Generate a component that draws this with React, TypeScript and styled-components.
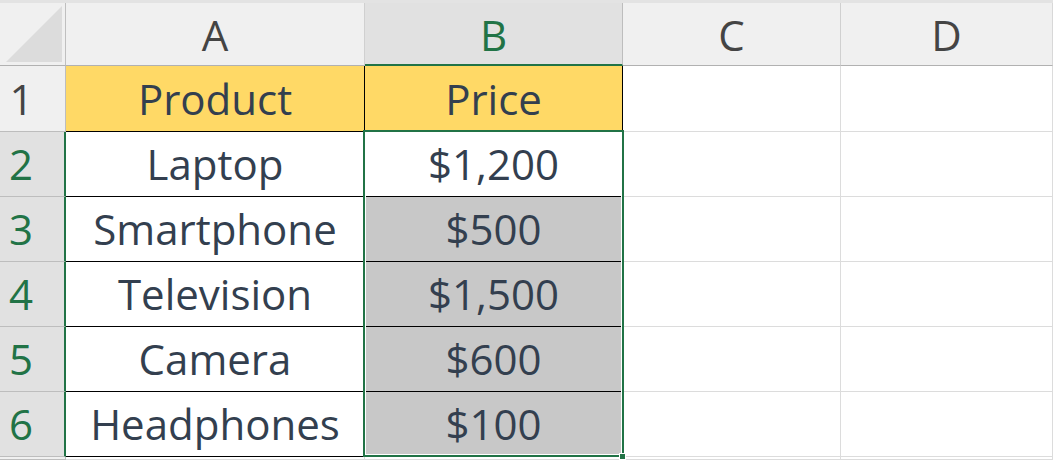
import React from "react";
import styled, { createGlobalStyle, css } from "styled-components";

const GREEN = "#217346";
const TEXT = "#333f4f";

const Global = createGlobalStyle`
  html, body { margin: 0; padding: 0; background: #ffffff; overflow: hidden; }
  * { box-sizing: border-box; }
`;

const Page = styled.div`
  width: 1053px;
  height: 460px;
  overflow: hidden;
  background: #ffffff;
  font-family: "Open Sans", "Noto Sans", sans-serif;
`;

const TopStrip = styled.div`
  height: 3px;
  background: #e3e3e3;
`;

const Grid = styled.div`
  position: relative;
  display: grid;
  grid-template-columns: 66px 299px 258px 218px 1fr;
  grid-template-rows: 63px 66px repeat(5, 65px) 1fr;
  height: 457px;
`;

const Corner = styled.div`
  background: #f0f0f0;
  border-right: 1px solid #bfbfbf;
  border-bottom: 1px solid #b1b1b1;
  display: flex;
  align-items: flex-end;
  justify-content: flex-end;
  padding: 0 3px 3px 0;
`;

const ColHeader = styled.div<{ $selected?: boolean; $last?: boolean }>`
  display: flex;
  align-items: center;
  justify-content: center;
  font-size: 42px;
  line-height: 1;
  padding-top: 2px;
  color: ${(p) => (p.$selected ? GREEN : "#444444")};
  background: ${(p) => (p.$selected ? "#e1e1e1" : "#f0f0f0")};
  border-right: 1px solid ${(p) => (p.$selected ? "#bdbdbd" : p.$last ? "#d8d8d8" : "#d0d0d0")};
  border-bottom: ${(p) => (p.$selected ? `2px solid ${GREEN}` : "1px solid #b1b1b1")};
`;

const RowHeader = styled.div<{ $selected?: boolean }>`
  display: flex;
  align-items: center;
  justify-content: center;
  font-size: 42px;
  line-height: 1;
  padding-right: 22px;
  color: ${(p) => (p.$selected ? GREEN : "#444444")};
  background: ${(p) => (p.$selected ? "#e1e1e1" : "#f0f0f0")};
  border-bottom: 1px solid #bdbdbd;
  border-right: ${(p) => (p.$selected ? `2px solid ${GREEN}` : "1px solid #bdbdbd")};
`;

type Fill = "yellow" | "gray" | "white";

const fills: Record<Fill, string> = {
  yellow: "#ffd966",
  gray: "#c8c8c8",
  white: "#ffffff",
};

const Cell = styled.div<{ $fill?: Fill; $outlined?: boolean }>`
  display: flex;
  align-items: center;
  justify-content: center;
  font-size: 42px;
  line-height: 1;
  color: ${TEXT};
  background: ${(p) => fills[p.$fill ?? "white"]};
  ${(p) =>
    p.$outlined
      ? css`
          border-right: 1px solid #000000;
          border-bottom: 1px solid #000000;
        `
      : css`
          border-right: 1px solid #dcdcdc;
          border-bottom: 1px solid #dcdcdc;
        `}
`;

const Selection = styled.div`
  position: absolute;
  left: 363px;
  top: 127px;
  width: 261px;
  height: 327px;
  border: 2px solid ${GREEN};
  box-shadow: inset 0 0 0 1px #ffffff;
  pointer-events: none;
`;

const FillHandle = styled.div`
  position: absolute;
  left: 619px;
  top: 450px;
  width: 7px;
  height: 7px;
  background: ${GREEN};
  border: 1px solid #ffffff;
`;

const rows: { product: string; price: string; fill: Fill }[] = [
  { product: "Laptop", price: "$1,200", fill: "white" },
  { product: "Smartphone", price: "$500", fill: "gray" },
  { product: "Television", price: "$1,500", fill: "gray" },
  { product: "Camera", price: "$600", fill: "gray" },
  { product: "Headphones", price: "$100", fill: "gray" },
];

export default function App() {
  return (
    <Page>
      <Global />
      <TopStrip />
      <Grid>
        <Corner>
          <svg width="56" height="56" viewBox="0 0 56 56">
            <polygon points="0,56 56,0 56,56" fill="#dcdcdc" />
          </svg>
        </Corner>
        <ColHeader>A</ColHeader>
        <ColHeader $selected>B</ColHeader>
        <ColHeader>C</ColHeader>
        <ColHeader $last>D</ColHeader>

        <RowHeader>1</RowHeader>
        <Cell $fill="yellow" $outlined>Product</Cell>
        <Cell $fill="yellow" $outlined>Price</Cell>
        <Cell />
        <Cell />

        {rows.map((r, i) => (
          <React.Fragment key={r.product}>
            <RowHeader $selected>{i + 2}</RowHeader>
            <Cell $outlined>{r.product}</Cell>
            <Cell $outlined $fill={r.fill}>{r.price}</Cell>
            <Cell />
            <Cell />
          </React.Fragment>
        ))}

        <RowHeader />
        <Cell />
        <Cell />
        <Cell />
        <Cell />

        <Selection />
        <FillHandle />
      </Grid>
    </Page>
  );
}
